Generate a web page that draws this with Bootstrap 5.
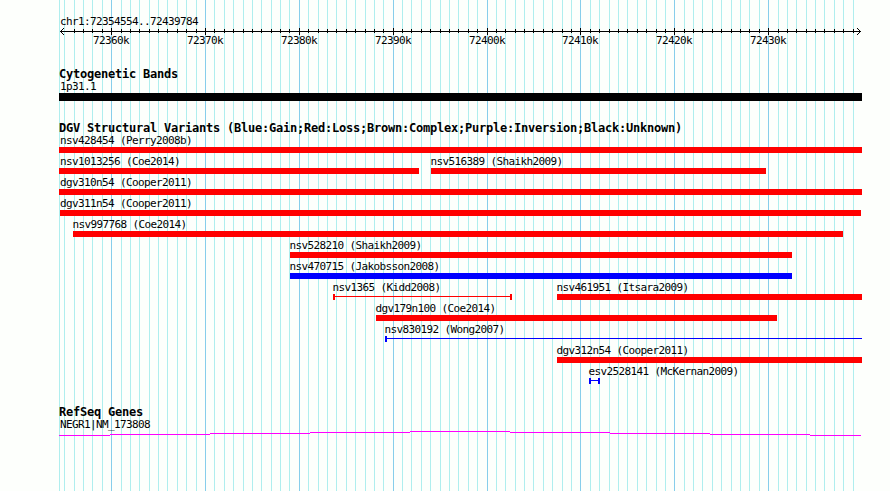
<!DOCTYPE html>
<html lang="en">
<head>
  <meta charset="utf-8">
  <title>chr1:72354554..72439784</title>
  <link rel="stylesheet" href="https://cdn.jsdelivr.net/npm/bootstrap@5.3.0/dist/css/bootstrap.min.css">
  <style>
    body {
      background-color: #fdfffc;
      color: #000;
      font-family: "DejaVu Sans Mono", "Liberation Mono", monospace;
      font-size: 11px;
      letter-spacing: -0.623px;
    }
    #browser {
      width: 890px;
      height: 491px;
    }
    svg {
      display: block;
      shape-rendering: crispEdges;
    }
    .region-name {
      height: 28px;
      padding: 14px 0 0 60px;
      line-height: 15px;
    }
    .track-title {
      height: 13px;
      padding-left: 59px;
      font-size: 12px;
      font-weight: bold;
      letter-spacing: -0.224px;
      line-height: 14px;
    }
    .cyto-track { margin-top: 17px; }
    .dgv-track { margin-top: 20px; }
    .gene-track { margin-top: 21px; }
    .dgv-track .track-title { height: 11px; }
    .lane > * {
      grid-area: 1 / 1;
    }
    .feature-label {
      height: 15px;
      line-height: 17px;
    }
    .cyto-track .feature-label,
    .gene-track .feature-label {
      height: 13px;
      line-height: 13px;
      margin-left: 60px;
    }
    .gene-track .feature-label { height: 12px; }
    .cyto-bar {
      width: 803px;
      height: 8px;
      margin-left: 59px;
      background: #000;
    }
    .glyph {
      height: 6px;
      color: red;
      background: currentColor;
    }
    .glyph.gain { color: blue; }
    .glyph.span-line {
      background: linear-gradient(currentColor, currentColor) 0 2px / 100% 1px no-repeat;
      border-left: 2px solid;
    }
    .glyph.closed { border-right: 2px solid; }
  </style>
</head>
<body>
<div id="browser" class="position-relative overflow-hidden text-nowrap">
  <!-- vertical grid behind all tracks -->
  <svg id="grid" class="position-absolute top-0 start-0" width="890" height="491"></svg>

  <div class="position-relative">
    <div class="region-name">chr1:72354554..72439784</div>
    <svg id="ruler" width="890" height="22"></svg>

    <div class="cyto-track">
      <div class="track-title">Cytogenetic Bands</div>
      <div class="feature-label">1p31.1</div>
      <div class="cyto-bar"></div>
    </div>

    <div class="dgv-track">
      <div class="track-title">DGV Structural Variants (Blue:Gain;Red:Loss;Brown:Complex;Purple:Inversion;Black:Unknown)</div>
      <div id="lanes"></div>
    </div>

    <div class="gene-track">
      <div class="track-title">RefSeq Genes</div>
      <div class="feature-label">NEGR1|NM_173808</div>
      <svg width="890" height="10" fill="#f0f">
        <rect x="59" y="5" width="51" height="1"/>
        <rect x="110" y="4" width="100" height="1"/>
        <rect x="210" y="3" width="100" height="1"/>
        <rect x="310" y="2" width="100" height="1"/>
        <rect x="410" y="1" width="100" height="1"/>
        <rect x="510" y="2" width="100" height="1"/>
        <rect x="610" y="3" width="100" height="1"/>
        <rect x="710" y="4" width="100" height="1"/>
        <rect x="810" y="5" width="51" height="1"/>
      </svg>
    </div>
  </div>
</div>

<script src="https://cdn.jsdelivr.net/npm/bootstrap@5.3.0/dist/js/bootstrap.bundle.min.js"></script>
<script>
  const start = 72354554;
  const end = 72439784;

  function toX(pos) {
    return Math.round(60 + (pos - start) * 800 / (end - start + 1));
  }

  // grid lines and ruler ticks, one per 1k, major every 10k
  let grid = '<rect x="59" y="0" width="1" height="491" fill="#afeeee"/>';
  let ruler = '<rect x="60" y="3" width="801" height="1"/>';
  // open arrow heads at both ends
  for (let i = 1; i <= 3; i++) {
    for (const y of [3 - i, 3 + i]) {
      ruler += `<rect x="${60 + i}" y="${y}" width="1" height="1"/>`;
      ruler += `<rect x="${860 - i}" y="${y}" width="1" height="1"/>`;
    }
  }
  for (let k = 72355; k <= 72439; k++) {
    const x = toX(k * 1000);
    const major = k % 10 === 0;
    grid += `<rect x="${x}" y="0" width="1" height="491" fill="${major ? '#87ceeb' : '#afeeee'}"/>`;
    // the first tick would run into the arrow head
    if (k > 72355) {
      ruler += `<rect x="${x}" y="${major ? 0 : 1}" width="1" height="${major ? 7 : 4}"/>`;
    }
    if (major) {
      ruler += `<text x="${x - 18}" y="16">${k}k</text>`;
    }
  }
  document.getElementById("grid").innerHTML = grid;
  document.getElementById("ruler").innerHTML = ruler;

  // [label, left, right, glyph classes]
  const lanes = [
    [["nsv428454 (Perry2008b)", 59, 862, ""]],
    [["nsv1013256 (Coe2014)", 59, 419, ""], ["nsv516389 (Shaikh2009)", 431, 766, ""]],
    [["dgv310n54 (Cooper2011)", 59, 862, ""]],
    [["dgv311n54 (Cooper2011)", 60, 861, ""]],
    [["nsv997768 (Coe2014)", 73, 843, ""]],
    [["nsv528210 (Shaikh2009)", 290, 792, ""]],
    [["nsv470715 (Jakobsson2008)", 290, 792, "gain"]],
    [["nsv1365 (Kidd2008)", 333, 512, "span-line closed"], ["nsv461951 (Itsara2009)", 557, 862, ""]],
    [["dgv179n100 (Coe2014)", 376, 777, ""]],
    [["nsv830192 (Wong2007)", 385, 862, "gain span-line"]],
    [["dgv312n54 (Cooper2011)", 557, 862, ""]],
    [["esv2528141 (McKernan2009)", 589, 600, "gain span-line closed"]]
  ];

  // labels never start left of the panel edge
  document.getElementById("lanes").innerHTML = lanes.map(lane =>
    '<div class="lane d-grid">' + lane.map(([label, left, right, type]) =>
      `<div style="margin-left: ${left}px; width: ${right - left}px">
        <div class="feature-label" style="margin-left: ${Math.max(60, left - 0.6) - left}px">${label}</div>
        <div class="glyph ${type}"></div>
      </div>`).join("") + "</div>"
  ).join("");
</script>
</body>
</html>
